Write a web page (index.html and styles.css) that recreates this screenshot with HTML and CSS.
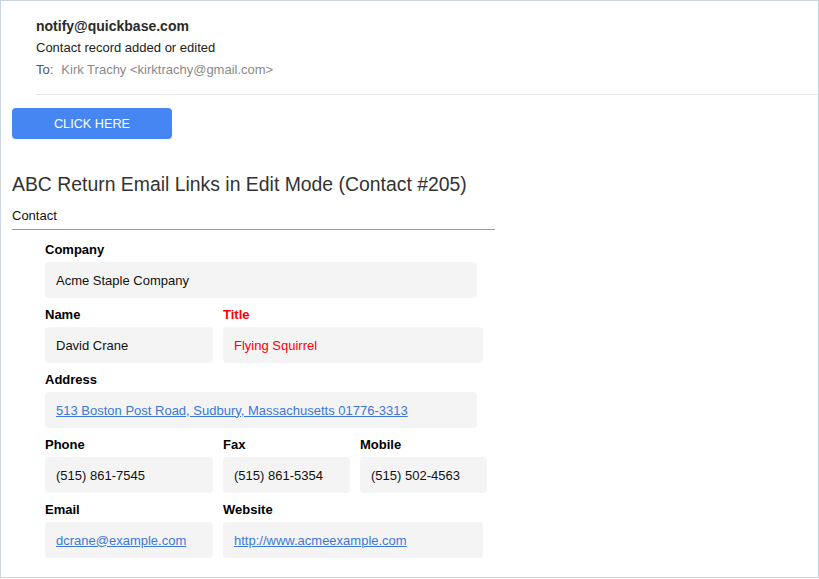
FILE: index.html
```html
<!DOCTYPE html>
<html>
<head>
<meta charset="utf-8">
<link rel="stylesheet" href="styles.css">
</head>
<body>
<div class="frame">
  <header class="mail-head">
    <div class="from">notify@quickbase.com</div>
    <div class="subject">Contact record added or edited</div>
    <div class="to"><span class="to-label">To:</span><span class="to-name">Kirk Trachy &lt;kirktrachy@gmail.com&gt;</span></div>
  </header>
  <main class="body">
    <a class="btn" href="#">CLICK HERE</a>
    <h1 class="title">ABC Return Email Links in Edit Mode (Contact #205)</h1>
    <div class="section">Contact</div>
    <div class="fields">
      <div class="row">
        <div class="field w-full">
          <div class="label">Company</div>
          <div class="value">Acme Staple Company</div>
        </div>
      </div>
      <div class="row">
        <div class="field w-s">
          <div class="label">Name</div>
          <div class="value">David Crane</div>
        </div>
        <div class="field w-l red">
          <div class="label">Title</div>
          <div class="value">Flying Squirrel</div>
        </div>
      </div>
      <div class="row">
        <div class="field w-full">
          <div class="label">Address</div>
          <div class="value"><a href="#">513 Boston Post Road, Sudbury, Massachusetts 01776-3313</a></div>
        </div>
      </div>
      <div class="row">
        <div class="field w-s">
          <div class="label">Phone</div>
          <div class="value">(515) 861-7545</div>
        </div>
        <div class="field w-xs">
          <div class="label">Fax</div>
          <div class="value">(515) 861-5354</div>
        </div>
        <div class="field w-xs">
          <div class="label">Mobile</div>
          <div class="value">(515) 502-4563</div>
        </div>
      </div>
      <div class="row">
        <div class="field w-s">
          <div class="label">Email</div>
          <div class="value"><a href="#">dcrane@example.com</a></div>
        </div>
        <div class="field w-l">
          <div class="label">Website</div>
          <div class="value"><a href="#">http://www.acmeexample.com</a></div>
        </div>
      </div>
    </div>
  </main>
</div>
</body>
</html>
```
FILE: styles.css
```css
html, body {
  margin: 0;
  padding: 0;
  background: #fff;
}
body {
  font-family: "Liberation Sans", Arial, Helvetica, sans-serif;
  color: #111;
}
.frame {
  box-sizing: border-box;
  width: 819px;
  height: 578px;
  border: 1px solid #c8d7df;
  overflow: hidden;
}
.mail-head {
  margin-left: 35px;
  padding-top: 16px;
  padding-bottom: 16px;
  border-bottom: 1px solid #e6e6e6;
}
.from {
  font-size: 14px;
  font-weight: bold;
  line-height: 18px;
  color: #2a2a2a;
}
.subject {
  margin-top: 5px;
  font-size: 13px;
  line-height: 16px;
  color: #222;
}
.to {
  margin-top: 6px;
  font-size: 13px;
  line-height: 16px;
}
.to-label {
  color: #555;
  margin-right: 8px;
}
.to-name {
  color: #8a8a8a;
}
.body {
  padding-left: 11px;
  padding-top: 13px;
}
.btn {
  display: flex;
  align-items: center;
  justify-content: center;
  width: 160px;
  height: 31px;
  border-radius: 4px;
  background: #4586f3;
  color: #fff;
  font-size: 12.7px;
  text-decoration: none;
}
.title {
  margin: 33px 0 0;
  font-size: 19.4px;
  font-weight: normal;
  line-height: 24px;
  color: #333;
}
.section {
  margin-top: 12px;
  width: 483px;
  font-size: 13px;
  line-height: 16px;
  padding-bottom: 5px;
  border-bottom: 1px solid #9a9a9a;
  color: #111;
}
.fields {
  margin-left: 33px;
  padding-top: 12px;
  display: flex;
  flex-direction: column;
  gap: 9px;
}
.row {
  display: flex;
  gap: 10px;
}
.field {
  display: flex;
  flex-direction: column;
  gap: 4px;
}
.w-full { width: 432px; }
.w-s { width: 168px; }
.w-l { width: 260px; }
.w-xs { width: 127px; }
.label {
  font-size: 13px;
  font-weight: bold;
  line-height: 16px;
  color: #000;
}
.value {
  box-sizing: border-box;
  height: 36px;
  padding: 0 11px;
  display: flex;
  align-items: center;
  background: #f4f4f4;
  border-radius: 4px;
  font-size: 13px;
  color: #111;
}
.value a {
  color: #3d78d8;
  text-decoration: underline;
}
.red .label,
.red .value {
  color: #f00;
}
```
